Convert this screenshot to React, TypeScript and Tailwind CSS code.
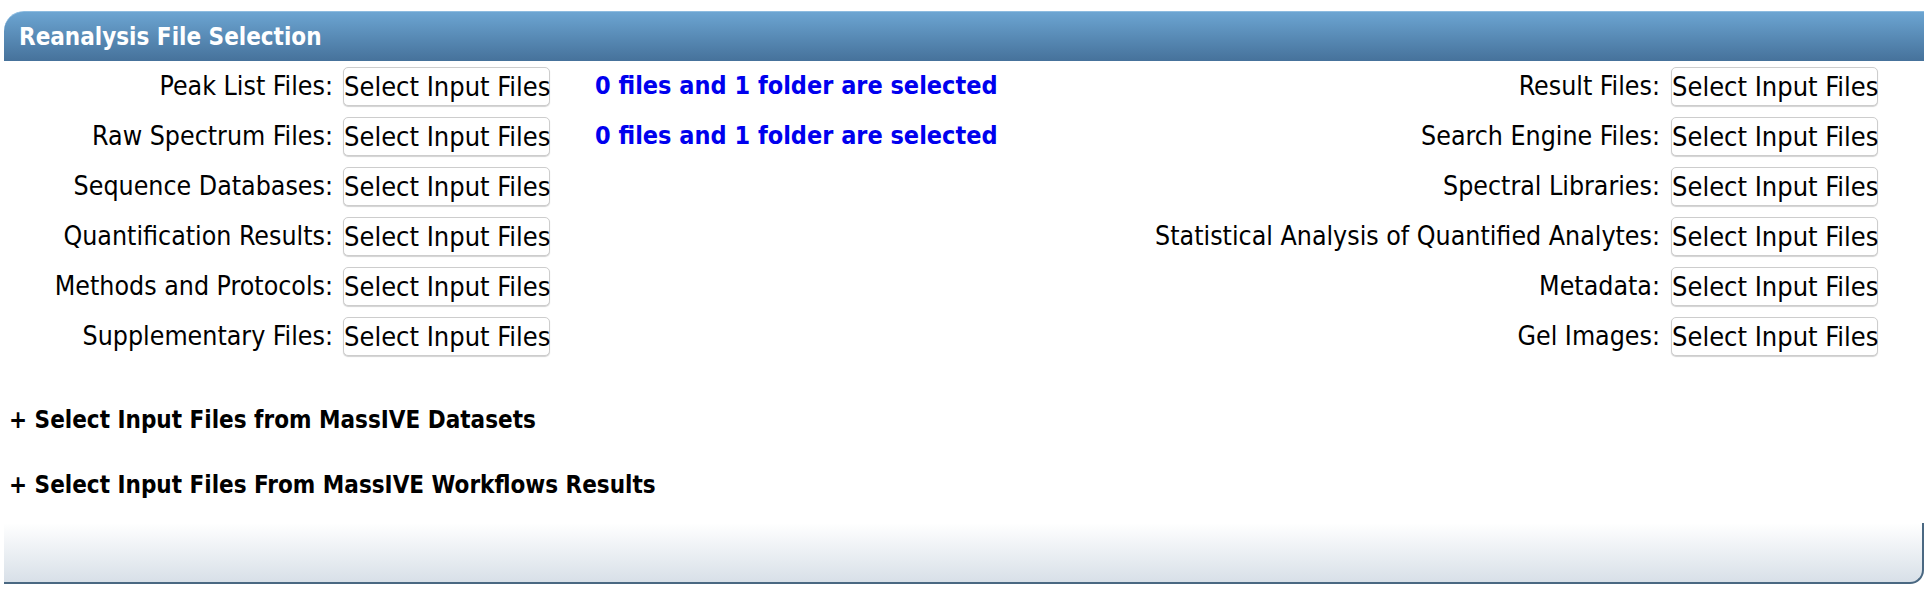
import React from "react";

const leftRows = [
  { label: "Peak List Files:", status: "0 files and 1 folder are selected" },
  { label: "Raw Spectrum Files:", status: "0 files and 1 folder are selected" },
  { label: "Sequence Databases:" },
  { label: "Quantification Results:" },
  { label: "Methods and Protocols:" },
  { label: "Supplementary Files:" },
];

const rightRows = [
  "Result Files:",
  "Search Engine Files:",
  "Spectral Libraries:",
  "Statistical Analysis of Quantified Analytes:",
  "Metadata:",
  "Gel Images:",
];

function SelectButton() {
  return (
    <button className="h-[39px] w-[207px] shrink-0 whitespace-nowrap rounded-[5px] border border-[#cdcdcd] bg-white text-center text-[27px] leading-none text-black shadow-[0_1px_1px_rgba(0,0,0,0.18)]">
      Select Input Files
    </button>
  );
}

export default function App() {
  return (
    <div className="min-h-[596px] bg-white pt-[11px] font-['DejaVu_Sans_Condensed','DejaVu_Sans',sans-serif] font-stretch-condensed text-black">
      <div className="ml-[4px] w-[1920px]">
        <div className="flex h-[50px] items-center rounded-tl-[20px] border-t border-[#8dbce0] bg-gradient-to-b from-[#6ca5d2] to-[#46729b] pl-[15px]">
          <h2 className="text-[24px] font-bold text-white">Reanalysis File Selection</h2>
        </div>

        <div className="flex flex-col">
          {leftRows.map((row, i) => (
            <div key={row.label} className="flex h-[50px] items-center">
              <span className="w-[329px] shrink-0 whitespace-nowrap text-right text-[26.5px]">{row.label}</span>
              <span className="ml-[10px]">
                <SelectButton />
              </span>
              <span className="ml-[45px] w-[420px] whitespace-nowrap text-[25px] font-bold text-[#0000ee]">
                {row.status ?? ""}
              </span>
              <div className="flex flex-1 items-center justify-end pr-[46px]">
                <span className="whitespace-nowrap text-right text-[26.5px]">{rightRows[i]}</span>
                <span className="ml-[11px]">
                  <SelectButton />
                </span>
              </div>
            </div>
          ))}
        </div>

        <div className="mt-[26px] flex h-[65px] items-center pl-[5px] text-[24px] font-bold">
          + Select Input Files from MassIVE Datasets
        </div>
        <div className="flex h-[65px] items-center pl-[5px] text-[24px] font-bold">
          + Select Input Files From MassIVE Workflows Results
        </div>

        <div className="mt-[6px] h-[61px] rounded-br-[14px] border-r-2 border-b-2 border-[#4a6882] bg-gradient-to-b from-[#ffffff] to-[#d8e0e8]" />
      </div>
    </div>
  );
}
